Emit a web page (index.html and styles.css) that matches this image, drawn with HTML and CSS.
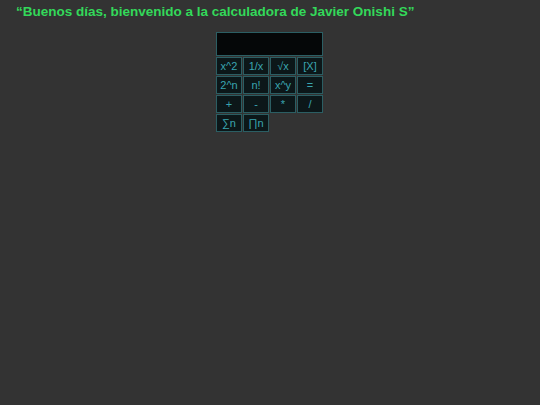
FILE: index.html
```html
<!DOCTYPE html>
<html lang="es">
<head>
<meta charset="utf-8">
<title>Calculadora</title>
<link rel="stylesheet" href="styles.css">
</head>
<body>
<h1 class="greeting">“Buenos días, bienvenido a la calculadora de Javier Onishi S”</h1>
<div class="calc">
  <div class="display"></div>
  <button class="key">x^2</button>
  <button class="key">1/x</button>
  <button class="key">√x</button>
  <button class="key">[X]</button>
  <button class="key">2^n</button>
  <button class="key">n!</button>
  <button class="key">x^y</button>
  <button class="key">=</button>
  <button class="key">+</button>
  <button class="key">-</button>
  <button class="key">*</button>
  <button class="key">/</button>
  <button class="key">∑n</button>
  <button class="key">∏n</button>
</div>
</body>
</html>
```
FILE: styles.css
```css
html, body {
  margin: 0;
  padding: 0;
  background: #333333;
}
body {
  padding: 4px 16px 0;
  font-family: "Liberation Sans", Arial, sans-serif;
}
.greeting {
  margin: 0;
  font-size: 13.5px;
  line-height: 16px;
  font-weight: bold;
  color: #33d95a;
}
.calc {
  margin: 12px 0 0 200px;
  display: grid;
  grid-template-columns: repeat(4, 26px);
  grid-auto-rows: 18px;
  gap: 1px;
  width: 107px;
}
.display {
  grid-column: 1 / span 4;
  height: 24px;
  box-sizing: border-box;
  background: #050708;
  border: 1px solid #2b5e63;
}
.calc .display { grid-row: 1; }
.calc { grid-template-rows: 24px; }
.key {
  margin: 0;
  padding: 0;
  box-sizing: border-box;
  width: 26px;
  height: 18px;
  background: #0c1719;
  border: 1px solid #2b5e63;
  color: #3aa5b0;
  font-family: "Liberation Sans", Arial, sans-serif;
  font-size: 11px;
  line-height: 16px;
  text-align: center;
}
```
